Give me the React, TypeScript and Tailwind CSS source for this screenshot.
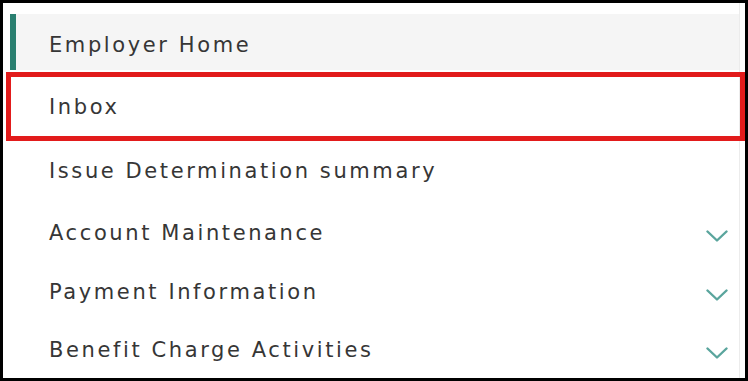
type Item = {
  label: string;
  height: string;
  offset: string;
  expandable?: boolean;
};

const items: Item[] = [
  { label: "Inbox", height: "h-[68px]", offset: "pt-[7px]" },
  { label: "Issue Determination summary", height: "h-[64px]", offset: "pt-[4px]" },
  { label: "Account Maintenance", height: "h-[60px]", offset: "pt-[4px]", expandable: true },
  { label: "Payment Information", height: "h-[58px]", offset: "pt-[4px]", expandable: true },
  { label: "Benefit Charge Activities", height: "h-[58px]", offset: "pt-[4px]", expandable: true },
];

const Chevron = () => (
  <svg width="22" height="13" viewBox="0 0 22 13" fill="none" className="mt-1 mr-[1px]">
    <polyline
      points="1.5,1.5 11,10.5 20.5,1.5"
      stroke="#5aa59d"
      strokeWidth="2.4"
      strokeLinecap="round"
      strokeLinejoin="round"
    />
  </svg>
);

const NavRow = ({ item }: { item: Item }) => (
  <div className={`flex items-center justify-between pl-[39px] pr-[10px] ${item.height} ${item.offset}`}>
    <span>{item.label}</span>
    {item.expandable && <Chevron />}
  </div>
);

export default function App() {
  return (
    <div
      className="relative w-[748px] h-[381px] border-[3px] border-black bg-white overflow-hidden text-[21px] text-[#363636] tracking-[2.6px]"
      style={{ fontFamily: '"DejaVu Sans", "Liberation Sans", sans-serif' }}
    >
      <div className="ml-[7px] mr-[5px] pt-[11px] h-full border-r border-[#ececec]">
        <div className="flex items-center h-[56px] pl-[33px] pt-[7px] bg-[#f5f5f5] border-l-[6px] border-[#2a7f70]">
          Employer Home
        </div>
        {items.map((item) => (
          <NavRow key={item.label} item={item} />
        ))}
      </div>

      {/* annotation highlight around Inbox */}
      <div className="absolute left-[3px] top-[69px] w-[739px] h-[69px] border-[5px] border-[#e21b1b]" />
    </div>
  );
}
